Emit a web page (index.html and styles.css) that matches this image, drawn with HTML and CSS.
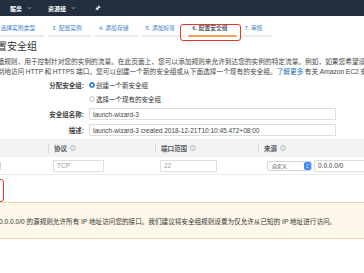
FILE: index.html
```html
<!DOCTYPE html>
<html lang="zh-CN">
<head>
    <meta charset="UTF-8">
    <meta name="viewport" content="width=device-width, initial-scale=1.0">
    <title>启动实例 - 配置安全组</title>
    <link rel="stylesheet" href="styles.css">
</head>
<body>
    <header class="topnav">
        <span class="nav-item">服务 <svg class="caret" viewBox="0 0 6 4"><path d="M1 1l2 2 2-2" fill="none" stroke="#aab7b8" stroke-width="1"/></svg></span>
        <span class="nav-item">资源组 <svg class="caret" viewBox="0 0 6 4"><path d="M1 1l2 2 2-2" fill="none" stroke="#aab7b8" stroke-width="1"/></svg></span>
        <svg class="pin" viewBox="0 0 10 10"><path d="M6 0.8L9.2 4 8.3 4.5 7 4.3 5.3 6 5.5 7.8 4.7 8.6 1.4 5.3 2.2 4.5 4 4.7 5.7 3 5.5 1.7Z" fill="#fff" stroke="#fff" stroke-width="0.5" stroke-linejoin="round"/><path d="M3 7L0.8 9.2" stroke="#fff" stroke-width="0.9"/></svg>
    </header>

    <nav class="steps">
        <a class="step">2. 选择实例类型</a>
        <a class="step">3. 配置实例</a>
        <a class="step">4. 添加存储</a>
        <a class="step">5. 添加标签</a>
        <a class="step active">6. 配置安全组</a>
        <a class="step">7. 审核</a>
    </nav>

    <main class="content">
        <h1>步骤 6: 配置安全组</h1>
        <p class="intro">
            <span class="line">安全组是一组防火墙规则，用于控制针对您的实例的流量。在此页面上，您可以添加规则来允许到达您的实例的特定流量。例如，如果您希望设置一个 Web 服务器并允许 Internet 流量到达您的实例，可以</span>
            <span class="line">添加规则以不受限制地访问 HTTP 和 HTTPS 端口。您可以创建一个新的安全组或从下面选择一个现有的安全组。<a class="link">了解更多</a> 有关 Amazon EC2 安全组的信息。</span>
        </p>

        <div class="form">
            <div class="form-row">
                <span class="form-label">分配安全组:</span>
                <label class="radio"><input type="radio" name="sg" checked>创建一个新安全组</label>
            </div>
            <div class="form-row">
                <span class="form-label"></span>
                <label class="radio"><input type="radio" name="sg">选择一个现有的安全组</label>
            </div>
            <div class="form-row field">
                <span class="form-label">安全组名称:</span>
                <input class="text-input wide" type="text" value="launch-wizard-3">
            </div>
            <div class="form-row field">
                <span class="form-label">描述:</span>
                <input class="text-input wide" type="text" value="launch-wizard-3 created 2018-12-21T10:10:45.472+08:00">
            </div>
        </div>

        <div class="rules">
            <div class="rules-head">
                <span class="th">类型 <svg class="info" viewBox="0 0 10 10"><circle cx="5" cy="5" r="4.3" fill="none" stroke="#8d9696" stroke-width="0.9"/><path d="M5 4.3v3.2M5 2.4v1" stroke="#8d9696" stroke-width="1"/></svg></span>
                <span class="th">协议 <svg class="info" viewBox="0 0 10 10"><circle cx="5" cy="5" r="4.3" fill="none" stroke="#8d9696" stroke-width="0.9"/><path d="M5 4.3v3.2M5 2.4v1" stroke="#8d9696" stroke-width="1"/></svg></span>
                <span class="th">端口范围 <svg class="info" viewBox="0 0 10 10"><circle cx="5" cy="5" r="4.3" fill="none" stroke="#8d9696" stroke-width="0.9"/><path d="M5 4.3v3.2M5 2.4v1" stroke="#8d9696" stroke-width="1"/></svg></span>
                <span class="th">来源 <svg class="info" viewBox="0 0 10 10"><circle cx="5" cy="5" r="4.3" fill="none" stroke="#8d9696" stroke-width="0.9"/><path d="M5 4.3v3.2M5 2.4v1" stroke="#8d9696" stroke-width="1"/></svg></span>
            </div>
            <div class="rules-row">
                <span class="td">
                    <span class="select type-select"><span class="select-text">SSH</span><span class="select-arrows"><svg viewBox="0 0 6 10"><path d="M1.5 4L3 2.5 4.5 4M1.5 6L3 7.5 4.5 6" fill="none" stroke="#fff" stroke-width="0.9"/></svg></span></span>
                </span>
                <span class="td"><input class="text-input proto" type="text" value="TCP" disabled></span>
                <span class="td"><input class="text-input port" type="text" value="22"></span>
                <span class="td source">
                    <span class="select"><span class="select-text">自定义</span><span class="select-arrows"><svg viewBox="0 0 6 10"><path d="M1.5 4L3 2.5 4.5 4M1.5 6L3 7.5 4.5 6" fill="none" stroke="#fff" stroke-width="0.9"/></svg></span></span>
                    <input class="text-input cidr" type="text" value="0.0.0.0/0">
                </span>
            </div>
        </div>

        <div class="rule-actions">
            <button type="button" class="add-rule">添加规则</button>
        </div>

        <div class="warning">0.0.0.0/0 的源规则允许所有 IP 地址访问您的接口。我们建议将安全组规则设置为仅允许从已知的 IP 地址进行访问。</div>
    </main>
</body>
</html>
```

FILE: styles.css
```css
* {
    box-sizing: border-box;
}
body {
    margin: 0;
    width: 364px;
    height: 273px;
    overflow: hidden;
    background-color: #fff;
    color: #333;
    font-family: "Liberation Sans", "Noto Sans CJK SC", sans-serif;
}

/* top console bar */
.topnav {
    display: flex;
    align-items: center;
    height: 16px;
    padding-left: 10px;
    background-color: #232f3e;
    color: #fff;
    font-size: 6px;
    font-weight: bold;
}
.nav-item {
    display: flex;
    align-items: center;
    gap: 5px;
    margin-right: 16px;
}
.caret {
    width: 5px;
    height: 4px;
}
.pin {
    width: 6px;
    height: 6px;
    margin-left: 3px;
}

/* wizard steps */
.steps {
    display: flex;
    margin-left: -10px;
    padding-top: 7px;
    font-size: 5.8px;
    white-space: nowrap;
}
.step {
    position: relative;
    margin-right: 4px;
    padding: 1px 9px 2px 4px;
    line-height: 9px;
    border-bottom: 2px solid #e9ebed;
    color: #3f7fc9;
}
.step.active {
    color: #545b64;
    font-weight: bold;
    border-bottom-color: #f5a35c;
}
.step.active::after {
    content: "";
    position: absolute;
    top: 1px;
    left: -8px;
    right: -4px;
    bottom: -6px;
    border: 1.5px solid #e2372b;
    border-radius: 3px;
}

/* page body, cropped on the left */
.content {
    margin-left: -56px;
    white-space: nowrap;
}
h1 {
    margin: 3px 0 0 9px;
    font-size: 10px;
    font-weight: normal;
    line-height: 14px;
    color: #333;
}
.intro {
    margin: 3px 0 0;
    font-size: 6.7px;
    line-height: 9.5px;
    word-spacing: -0.4px;
    color: #444;
}
.intro .line {
    display: block;
}
.link {
    color: #1a6fc0;
}

.form {
    margin-top: 2px;
    font-size: 6.5px;
}
.form-row {
    display: flex;
    align-items: center;
    gap: 5px;
    height: 14px;
}
.form-row.field {
    height: 16px;
}
.form-label {
    width: 140px;
    text-align: right;
    font-weight: bold;
    color: #444;
}
.radio {
    display: flex;
    align-items: center;
    gap: 1px;
    color: #333;
}
.radio input {
    appearance: none;
    width: 6px;
    height: 6px;
    margin: 0;
    border: 0.7px solid #c4c4c4;
    border-radius: 50%;
    background-color: #fff;
}
.radio input:checked {
    border-color: #2f7ef3;
    background: radial-gradient(circle, #fff 0 1.1px, #2f7ef3 1.5px);
}
.text-input {
    height: 12px;
    padding: 0 3px;
    border: 1px solid #dcdfe0;
    border-radius: 0;
    background-color: #fff;
    color: #444;
    font-family: "Liberation Sans", "Noto Sans CJK SC", sans-serif;
    font-size: 6.5px;
}
.text-input.wide {
    width: 247px;
}

/* rules table */
.rules {
    margin-top: 1px;
    width: 440px;
}
.rules-head,
.rules-row {
    display: grid;
    grid-template-columns: 104px 107px 103px 1fr;
    align-items: center;
}
.rules-head {
    height: 18px;
    background-color: #f2f3f3;
    font-size: 6.5px;
    font-weight: bold;
    color: #545b64;
}
.th {
    display: flex;
    align-items: center;
    gap: 3px;
    height: 10px;
    padding-left: 5px;
    border-left: 1px solid #d5dbdb;
}
.th:first-child {
    border-left: none;
}
.info {
    width: 6px;
    height: 6px;
}
.rules-row {
    height: 18px;
    border-bottom: 1px solid #eaeded;
}
.td {
    display: flex;
    align-items: center;
    padding-left: 5px;
}
.proto {
    width: 51px;
    color: #9aa0a6;
}
.port {
    width: 57px;
    color: #9aa0a6;
}
.source {
    gap: 2px;
}
.select {
    display: flex;
    align-items: center;
    justify-content: space-between;
    width: 45px;
    height: 10px;
    margin-left: 4px;
    padding-left: 4px;
    border: 1px solid #d3d3d3;
    border-radius: 2px;
    background-color: #fff;
    font-size: 5px;
    color: #333;
}
.type-select {
    width: 52px;
    margin-left: 0;
}
.select-arrows {
    display: flex;
    width: 7px;
    height: 8px;
    border-radius: 2px;
    background-color: #3d8af7;
}
.select-arrows svg {
    width: 7px;
    height: 8px;
}
.cidr {
    width: 80px;
    color: #444;
}

.rule-actions {
    padding: 4px 0 0 12px;
    height: 27px;
}
.add-rule {
    width: 48px;
    height: 23px;
    border: 1.5px solid #e2372b;
    border-radius: 3px;
    background-color: #fff;
    color: #444;
    font-size: 6px;
}

.warning {
    height: 37px;
    padding: 14px 0 0 55px;
    border-top: 1px solid #f2d2b3;
    border-bottom: 1px solid #f2d2b3;
    background-color: #fdf8e9;
    font-size: 6.6px;
    line-height: 9px;
    color: #333;
}
```
